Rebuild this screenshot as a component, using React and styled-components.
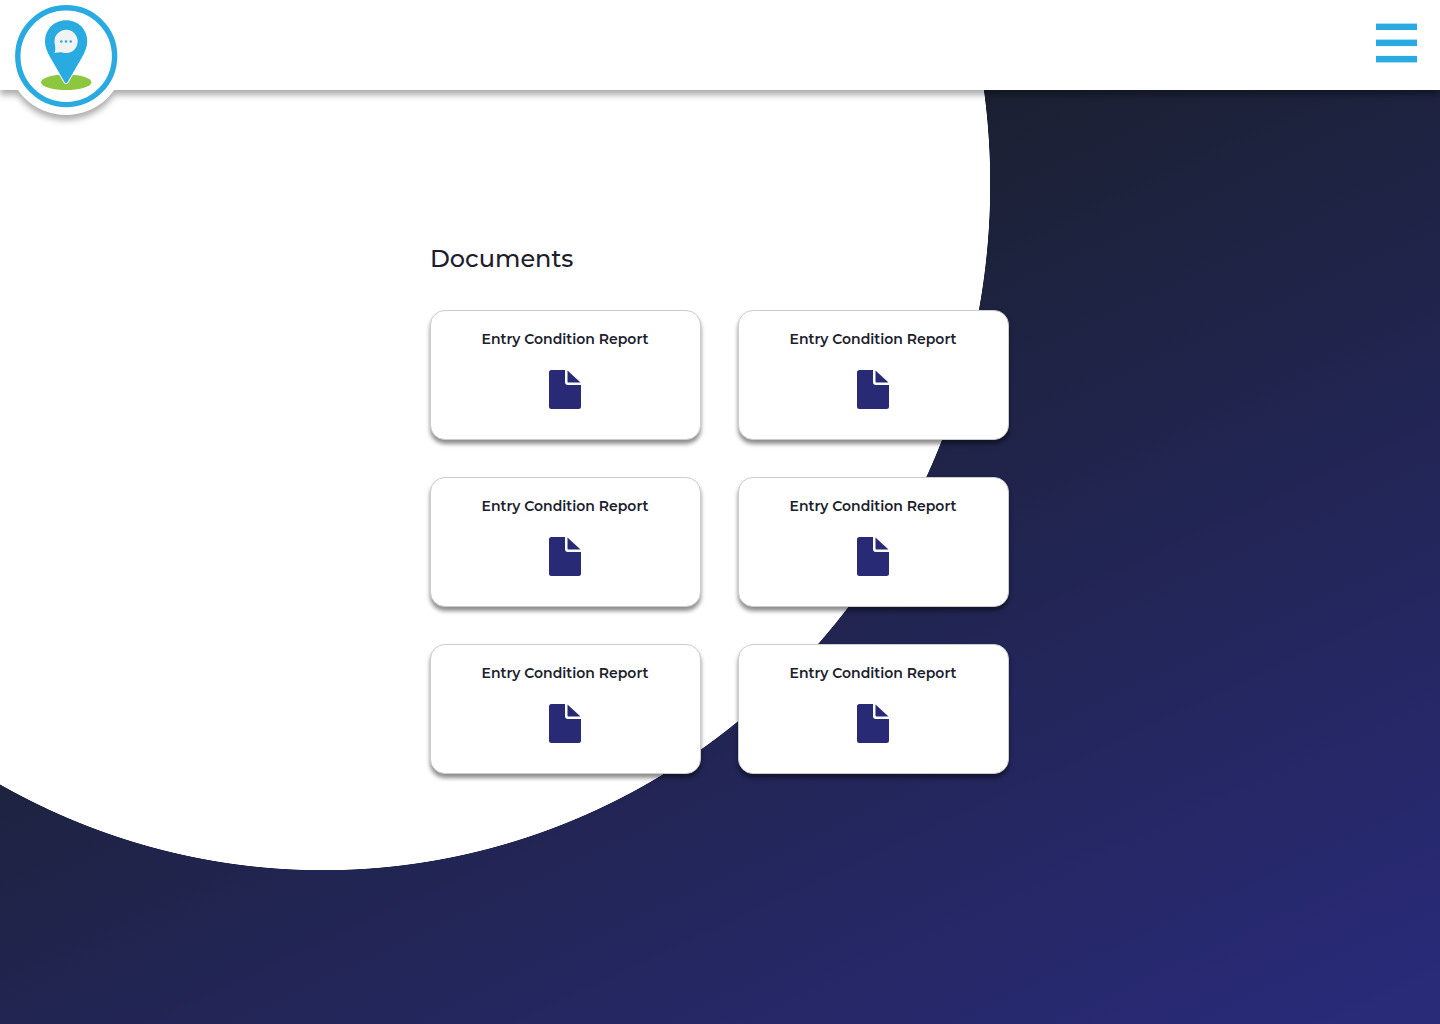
import React from "react";
import styled, { createGlobalStyle } from "styled-components";

const GlobalStyle = createGlobalStyle`
  *, *::before, *::after { box-sizing: border-box; }
  body { margin: 0; font-family: Montserrat, Inter, "Liberation Sans", sans-serif; color: #1a202c; }
`;

const Page = styled.div`
  height: 100vh;
  min-height: 1021px;
  overflow: hidden;
  display: flex;
  flex-direction: column;
  background:
    radial-gradient(ellipse 667.5px 686.5px at 323px 184px, #fff 99.9%, transparent 100%),
    linear-gradient(155deg, #1a202e 29%, #292a78 97%);
`;

const Header = styled.header`
  flex: none;
  height: 90px;
  display: flex;
  justify-content: space-between;
  align-items: flex-start;
  padding: 0 23px 0 7px;
  background: #fff;
  filter: drop-shadow(0 5px 3px rgba(0, 0, 0, 0.32));
`;

const LogoLink = styled.a`
  flex: none;
  width: 118px;
  height: 118px;
  margin-top: -3px;
  border-radius: 50%;
  background: #fff;
  svg { display: block; }
`;

const MenuButton = styled.button`
  margin: 23px 0 0;
  padding: 0;
  border: 0;
  background: none;
  svg { display: block; }
`;

const Content = styled.main`
  width: 580px;
  margin: 153px auto 0;
`;

const Heading = styled.h1`
  margin: 0 0 35px;
  font-size: 24px;
  line-height: 32px;
  font-weight: 500;
  color: #1a202c;
`;

const Grid = styled.section`
  display: grid;
  grid-template-columns: 271px 271px;
  grid-auto-rows: 130px;
  gap: 37px;
`;

const Card = styled.article`
  display: flex;
  flex-direction: column;
  align-items: center;
  padding: 18px 1px 0 0;
  border: 1px solid #ccc;
  border-radius: 15px;
  background: #fff;
  box-shadow: 0 4px 4px rgba(0, 0, 0, 0.45);
`;

const CardTitle = styled.h2`
  margin: 0 0 21px;
  font-size: 14px;
  line-height: 20px;
  font-weight: 600;
  white-space: nowrap;
`;

const documents = Array.from({ length: 6 }, () => "Entry Condition Report");

const Logo = () => (
  <svg width="118" height="118" viewBox="7 -3 118 118" aria-hidden="true">
    <circle cx="66.2" cy="56.2" r="48.4" fill="#fff" stroke="#29abe2" strokeWidth="5.4" />
    <ellipse cx="66.2" cy="82.2" rx="25.2" ry="7.8" fill="#8dc63f" />
    <path
      d="M66.1 20.200C54 20.200 45 29.500 45 41.300C45 47 47.200 52 50 57L64.200 81.600Q66.100 84.800 68 81.600L82.200 57C85 52 87.200 47 87.200 41.300C87.200 29.500 78.200 20.200 66.100 20.200Z"
      fill="#29abe2"
      stroke="#fff"
      strokeWidth="2"
      paintOrder="stroke"
    />
    <path
      d="M66.200 29.700A11.700 11.700 0 1 1 62.300 52.500C59.800 52.100 57 52.700 54.500 53C55.600 50.800 55.400 48.500 54.900 44.500A11.700 11.700 0 0 1 66.200 29.700Z"
      fill="#f1f2f2"
    />
    <circle cx="61.3" cy="41.500" r="1.300" fill="#29abe2" />
    <circle cx="66" cy="41.500" r="1.300" fill="#29abe2" />
    <circle cx="70.7" cy="41.500" r="1.300" fill="#29abe2" />
  </svg>
);

const MenuIcon = () => (
  <svg width="41" height="40" viewBox="0 0 41 40" fill="#29abe2" aria-hidden="true">
    <rect y="0.600" width="41" height="6.400" />
    <rect y="16.600" width="41" height="6.500" />
    <rect y="32.900" width="41" height="6.500" />
  </svg>
);

const FileIcon = () => (
  <svg width="32" height="39" viewBox="0 0 32 39" fill="#292a75" aria-hidden="true">
    <path d="M2.500 0H16V12Q16 15 19 15H32V36.500Q32 39 29.500 39H2.500Q0 39 0 36.500V2.500Q0 0 2.500 0Z" />
    <path d="M18.500 0.500V11.700Q18.500 12.500 19.300 12.500H31.500Z" />
  </svg>
);

export default function App() {
  return (
    <>
      <GlobalStyle />
      <Page>
        <Header>
          <LogoLink aria-label="Home"><Logo /></LogoLink>
          <MenuButton aria-label="Menu"><MenuIcon /></MenuButton>
        </Header>
        <Content>
          <Heading>Documents</Heading>
          <Grid>
            {documents.map((title, i) => (
              <Card key={i}>
                <CardTitle>{title}</CardTitle>
                <FileIcon />
              </Card>
            ))}
          </Grid>
        </Content>
      </Page>
    </>
  );
}
